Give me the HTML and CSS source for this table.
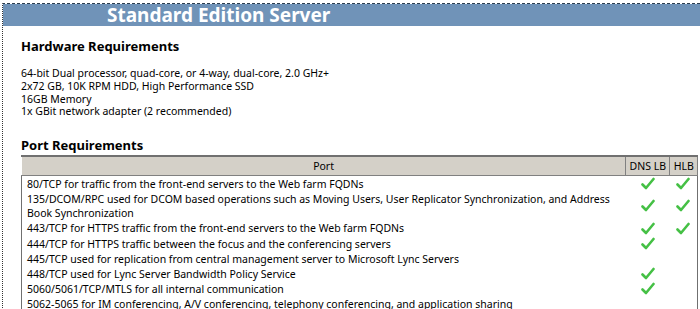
FILE: index.html
```html
<!DOCTYPE html>
<html lang="en">
<head>
    <meta charset="UTF-8">
    <title>Standard Edition Server</title>
    <link rel="stylesheet" href="styles.css">
</head>
<body>
    <div class="page">
        <div class="banner">Standard Edition Server</div>
        <div class="content">
            <h2>Hardware Requirements</h2>
            <p class="specs">
                64-bit Dual processor, quad-core, or 4-way, dual-core, 2.0 GHz+<br>
                2x72 GB, 10K RPM HDD, High Performance SSD<br>
                16GB Memory<br>
                1x GBit network adapter (2 recommended)
            </p>

            <h2>Port Requirements</h2>
            <table class="ports">
                <thead>
                    <tr>
                        <th class="port">Port</th>
                        <th>DNS LB</th>
                        <th>HLB</th>
                    </tr>
                </thead>
                <tbody>
                    <tr>
                        <td>80/TCP for traffic from the front-end servers to the Web farm FQDNs</td>
                        <td class="ok"><svg class="check" viewBox="0 0 14 14"><path d="M1.5 7.5 L5 11 L12.5 2"/></svg></td>
                        <td class="ok"><svg class="check" viewBox="0 0 14 14"><path d="M1.5 7.5 L5 11 L12.5 2"/></svg></td>
                    </tr>
                    <tr>
                        <td>135/DCOM/RPC used for DCOM based operations such as Moving Users, User Replicator Synchronization, and Address<br>Book Synchronization</td>
                        <td class="ok"><svg class="check" viewBox="0 0 14 14"><path d="M1.5 7.5 L5 11 L12.5 2"/></svg></td>
                        <td class="ok"><svg class="check" viewBox="0 0 14 14"><path d="M1.5 7.5 L5 11 L12.5 2"/></svg></td>
                    </tr>
                    <tr>
                        <td>443/TCP for HTTPS traffic from the front-end servers to the Web farm FQDNs</td>
                        <td class="ok"><svg class="check" viewBox="0 0 14 14"><path d="M1.5 7.5 L5 11 L12.5 2"/></svg></td>
                        <td class="ok"><svg class="check" viewBox="0 0 14 14"><path d="M1.5 7.5 L5 11 L12.5 2"/></svg></td>
                    </tr>
                    <tr>
                        <td>444/TCP for HTTPS traffic between the focus and the conferencing servers</td>
                        <td class="ok"><svg class="check" viewBox="0 0 14 14"><path d="M1.5 7.5 L5 11 L12.5 2"/></svg></td>
                        <td></td>
                    </tr>
                    <tr>
                        <td>445/TCP used for replication from central management server to Microsoft Lync Servers</td>
                        <td></td>
                        <td></td>
                    </tr>
                    <tr>
                        <td>448/TCP used for Lync Server Bandwidth Policy Service</td>
                        <td class="ok"><svg class="check" viewBox="0 0 14 14"><path d="M1.5 7.5 L5 11 L12.5 2"/></svg></td>
                        <td></td>
                    </tr>
                    <tr>
                        <td>5060/5061/TCP/MTLS for all internal communication</td>
                        <td class="ok"><svg class="check" viewBox="0 0 14 14"><path d="M1.5 7.5 L5 11 L12.5 2"/></svg></td>
                        <td></td>
                    </tr>
                    <tr>
                        <td>5062-5065 for IM conferencing, A/V conferencing, telephony conferencing, and application sharing</td>
                        <td></td>
                        <td></td>
                    </tr>
                </tbody>
            </table>
        </div>
    </div>
</body>
</html>
```

FILE: styles.css
```css
body { margin: 0; font-family: "Noto Sans", "Open Sans", sans-serif; font-size: 10.5px; color: #000; background: #fff; }
.page { margin: 3px 0 0 2px; border-top: 1px dashed #2c3e50; border-left: 1px dotted #333; height: 310px; }
.banner { background: #7093b8; color: #fff; font-weight: bold; font-size: 19px; height: 22px; line-height: 22px; padding-left: 104px; }
.content { padding: 0 2px 0 18px; }
h2 { font-size: 13px; font-weight: bold; margin: 12px 0 0; line-height: 16px; }
.specs { margin: 13px 0 0; line-height: 12.8px; }
.specs + h2 { margin-top: 19px; }
.ports { width: 100%; margin-top: 2px; border-collapse: collapse; border: 1px solid #707070; border-top-width: 2px; }
.ports th { background: #d4d0c8; font-weight: normal; height: 18px; padding: 0 3px; border-left: 1px solid #fff; border-right: 1px solid #808080; border-bottom: 1px solid #808080; white-space: nowrap; }
.ports td { padding: 1px 5px 0; line-height: 14px; vertical-align: middle; }
.ports td.ok { text-align: center; padding: 0; }
.check { width: 14px; height: 14px; display: inline-block; vertical-align: middle; }
.check path { fill: none; stroke: #45c045; stroke-width: 2.6; stroke-linecap: round; stroke-linejoin: round; }
```
